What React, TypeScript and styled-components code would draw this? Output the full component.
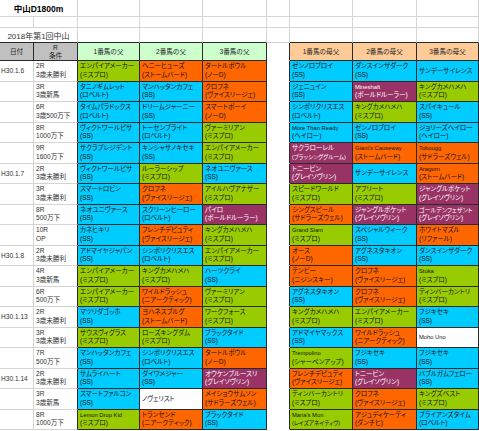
import React from "react";
import styled, { createGlobalStyle } from "styled-components";

type Fill = "g" | "o" | "b" | "p" | "w";
type Horse = [Fill, string, string?];
interface Race {
  date?: string;
  r: string;
  cond: string;
  horses: Horse[];
}

const FILL: Record<Fill, string> = {
  g: "#99cc00",
  o: "#ff6600",
  b: "#00ccff",
  p: "#993366",
  w: "#ffffff",
};
const DARK = "#2a2a2a";
const LIGHT = "#d4d4d4";
const FONT = `"Liberation Sans", "Noto Sans CJK JP", sans-serif`;

const GlobalStyle = createGlobalStyle`
  html, body { margin: 0; padding: 0; background: #fff; }
  body { font-family: ${FONT}; }
`;

const Sheet = styled.div`
  display: grid;
  grid-template-columns: 34px 44px 62px 63px 64px 23px 63px 64px 62px;
  grid-template-rows: 17px 11px 15px 18px repeat(18, 20.5px);
  width: 479px;
  font-family: ${FONT};
  color: #222;
`;

const BaseCell = styled.div<{ $right?: string; $bottom?: string }>`
  box-sizing: border-box;
  min-width: 0;
  border-right: 1px solid ${(p) => p.$right ?? LIGHT};
  border-bottom: 1px solid ${(p) => p.$bottom ?? LIGHT};
`;

const TitleCell = styled(BaseCell)<{ $bold?: boolean }>`
  grid-column: span 2;
  display: flex;
  align-items: center;
  justify-content: center;
  white-space: nowrap;
  font-size: ${(p) => (p.$bold ? "8.5px" : "8px")};
  font-weight: ${(p) => (p.$bold ? 700 : 400)};
  color: ${(p) => (p.$bold ? "#000" : "#333")};
`;

const HeadCell = styled(BaseCell)<{ $tone: "grey" | "sire" | "dam" }>`
  background: ${(p) =>
    p.$tone === "grey" ? "#c0c0c0" : p.$tone === "sire" ? "#ccffcc" : "#ffcc99"};
  border-right-color: ${DARK};
  border-bottom-color: ${DARK};
  display: flex;
  flex-direction: column;
  align-items: center;
  justify-content: center;
  font-size: 6.6px;
  line-height: 8px;
  color: #222;
  white-space: nowrap;
`;

const SpacerCell = styled(BaseCell)`
  border-right-color: ${DARK};
  border-bottom-color: #fff;
`;

const DateCell = styled(BaseCell)`
  display: flex;
  align-items: center;
  padding-left: 1px;
  font-size: 6.6px;
  color: #333;
  white-space: nowrap;
`;

const CondCell = styled(BaseCell)`
  border-right-color: ${DARK};
  display: flex;
  flex-direction: column;
  justify-content: center;
  padding-left: 2px;
  font-size: 6.6px;
  line-height: 8.5px;
  color: #333;
  white-space: nowrap;
`;

const HorseCell = styled(BaseCell)<{ $fill: Fill }>`
  border-right-color: ${DARK};
  border-bottom-color: ${DARK};
  background: ${(p) => FILL[p.$fill]};
  color: ${(p) => (p.$fill === "p" ? "#ffffff" : "#111")};
  display: flex;
  flex-direction: column;
  justify-content: center;
  padding-left: 2px;
  overflow: hidden;
  line-height: 8.5px;
  font-feature-settings: "palt";
  white-space: nowrap;
`;

const Name = styled.span<{ $latin?: boolean; $long?: boolean }>`
  display: block;
  font-size: ${(p) => (p.$latin ? "5.8px" : p.$long ? "6px" : "6.5px")};
`;

const Lineage = styled.span<{ $long?: boolean }>`
  display: block;
  font-size: ${(p) => (p.$long ? "5.6px" : "6.5px")};
`;

const races: Race[] = [
  { date: "H30.1.6", r: "2R", cond: "3歳未勝利", horses: [["g", "エンパイアメーカー", "ミスプロ"], ["o", "ヘニーヒューズ", "ストームバード"], ["o", "タートルボウル", "ノーD"], ["b", "ゼンノロブロイ", "SS"], ["b", "ダンスインザダーク", "SS"], ["b", "サンデーサイレンス"]] },
  { r: "3R", cond: "3歳新馬", horses: [["b", "タニノギムレット", "ロベルト"], ["b", "マンハッタンカフェ", "SS"], ["o", "クロフネ", "ヴァイスリージェ"], ["b", "ジェニュイン", "SS"], ["p", "Mineshaft", "ボールドルーラー"], ["g", "キングカメハメハ", "ミスプロ"]] },
  { r: "6R", cond: "3歳500万下", horses: [["b", "タイムパラドックス", "ロベルト"], ["b", "ドリームジャーニー", "SS"], ["o", "スマートボーイ", "ノーD"], ["b", "シンボリクリスエス", "ロベルト"], ["g", "キングカメハメハ", "ミスプロ"], ["b", "スパイキュール", "SS"]] },
  { r: "8R", cond: "1000万下", horses: [["b", "ヴィクトワールピサ", "SS"], ["b", "トーセンブライト", "ロベルト"], ["g", "ヴァーミリアン", "ミスプロ"], ["b", "More Than Ready", "ヘイロー"], ["b", "ゼンノロブロイ", "SS"], ["b", "ジョリーズヘイロー", "ヘイロー"]] },
  { r: "9R", cond: "1600万下", horses: [["b", "サクラプレジデント", "SS"], ["b", "キンシャサノキセキ", "SS"], ["g", "エンパイアメーカー", "ミスプロ"], ["p", "サクラローレル", "ブラッシンググルーム"], ["o", "Giant's Causeway", "ストームバード"], ["o", "Tobougg", "サドラーズウェル"]] },
  { date: "H30.1.7", r: "2R", cond: "3歳未勝利", horses: [["b", "ヴィクトワールピサ", "SS"], ["g", "ルーラーシップ", "ミスプロ"], ["b", "ネオユニヴァース", "SS"], ["p", "トニービン", "グレイソヴリン"], ["b", "サンデーサイレンス"], ["o", "Aragorn", "ストームバード"]] },
  { r: "3R", cond: "3歳未勝利", horses: [["b", "スマートロビン", "SS"], ["o", "クロフネ", "ヴァイスリージェ"], ["g", "アイルハヴアナザー", "ミスプロ"], ["g", "スピードワールド", "ミスプロ"], ["g", "アフリート", "ミスプロ"], ["p", "ジャングルポケット", "グレイソヴリン"]] },
  { r: "8R", cond: "500万下", horses: [["b", "ネオユニヴァース", "SS"], ["b", "スクリーンヒーロー", "ロベルト"], ["p", "パイロ", "ボールドルーラー"], ["o", "シングスピール", "サドラーズウェル"], ["p", "ジャングルポケット", "グレイソヴリン"], ["p", "ゴールデンフェザント", "グレイソヴリン"]] },
  { r: "10R", cond: "OP", horses: [["b", "カネヒキリ", "SS"], ["o", "フレンチデピュティ", "ヴァイスリージェ"], ["g", "キングカメハメハ", "ミスプロ"], ["g", "Grand Slam", "ミスプロ"], ["b", "スペシャルウィーク", "SS"], ["o", "ホワイトマズル", "リファール"]] },
  { date: "H30.1.8", r: "2R", cond: "3歳未勝利", horses: [["b", "アドマイヤジャパン", "SS"], ["b", "シンボリクリスエス", "ロベルト"], ["g", "エンパイアメーカー", "ミスプロ"], ["o", "オース", "ノーD"], ["b", "アグネスタキオン", "SS"], ["b", "ダンスインザダーク", "SS"]] },
  { r: "4R", cond: "3歳新馬", horses: [["g", "エンパイアメーカー", "ミスプロ"], ["g", "キングカメハメハ", "ミスプロ"], ["b", "ハーツクライ", "SS"], ["o", "テンビー", "ニジンスキー"], ["o", "クロフネ", "ヴァイスリージェ"], ["g", "Stuka", "ミスプロ"]] },
  { r: "6R", cond: "500万下", horses: [["g", "エンパイアメーカー", "ミスプロ"], ["o", "ワイルドラッシュ", "ニアークティック"], ["g", "ヴァーミリアン", "ミスプロ"], ["b", "アグネスタキオン", "SS"], ["o", "クロフネ", "ヴァイスリージェ"], ["g", "ティンバーカントリ", "ミスプロ"]] },
  { date: "H30.1.13", r: "2R", cond: "3歳未勝利", horses: [["b", "マツリダゴッホ", "SS"], ["o", "ヨハネスブルグ", "ストームバード"], ["g", "ワークフォース", "ミスプロ"], ["g", "キングカメハメハ", "ミスプロ"], ["g", "エンパイアメーカー", "ミスプロ"], ["b", "フジキセキ", "SS"]] },
  { r: "3R", cond: "3歳未勝利", horses: [["g", "サウスヴィグラス", "ミスプロ"], ["g", "ローズキングダム", "ミスプロ"], ["b", "ブラックタイド", "SS"], ["b", "アドマイヤマックス", "SS"], ["o", "ワイルドラッシュ", "ニアークティック"], ["w", "Moho Uno"]] },
  { r: "7R", cond: "500万下", horses: [["b", "マンハッタンカフェ", "SS"], ["b", "シンボリクリスエス", "ロベルト"], ["o", "タートルボウル", "ノーD"], ["g", "Trempolino", "シャーペンアップ"], ["b", "フジキセキ", "SS"], ["b", "フジキセキ", "SS"]] },
  { date: "H30.1.14", r: "2R", cond: "3歳未勝利", horses: [["b", "サムライハート", "SS"], ["b", "ダイワメジャー", "SS"], ["p", "オウケンブルースリ", "グレイソヴリン"], ["o", "フレンチデピュティ", "ヴァイスリージェ"], ["p", "トニービン", "グレイソヴリン"], ["b", "バブルガムフェロー", "SS"]] },
  { r: "3R", cond: "3歳新馬", horses: [["b", "スマートファルコン", "SS"], ["w", "ノヴェリスト"], ["o", "メイショウサムソン", "サドラーズウェル"], ["g", "ティンバーカントリ", "ミスプロ"], ["o", "クロフネ", "ヴァイスリージェ"], ["g", "キングズベスト", "ミスプロ"]] },
  { r: "8R", cond: "1000万下", horses: [["g", "Lemon Drop Kid", "ミスプロ"], ["o", "トランセンド", "ニアークティック"], ["b", "ブラックタイド", "SS"], ["g", "Maria's Mon", "レイズアネイティヴ"], ["o", "アジュディケーティ", "ダンチヒ"], ["b", "ブライアンズタイム", "ロベルト"]] },
];

const sireHeads = ["1番馬の父", "2番馬の父", "3番馬の父"];
const damHeads = ["1番馬の母父", "2番馬の母父", "3番馬の母父"];

const HorseBox: React.FC<{ h: Horse }> = ({ h }) => {
  const [fill, name, line] = h;
  return (
    <HorseCell $fill={fill}>
      <Name $latin={/^[A-Za-z]/.test(name)} $long={name.length >= 10}>
        {name}
      </Name>
      {line && <Lineage $long={line.length >= 9}>({line})</Lineage>}
    </HorseCell>
  );
};

const blanks = (n: number, bottom?: string, spacerAt?: number) =>
  Array.from({ length: n }, (_, i) => (
    <BaseCell key={i} $bottom={spacerAt === i ? LIGHT : bottom} />
  ));

export default function App() {
  return (
    <>
      <GlobalStyle />
      <Sheet>
        <TitleCell $bold>中山D1800m</TitleCell>
        {blanks(7)}
        {blanks(9)}
        <TitleCell $bottom={DARK}>2018年第1回中山</TitleCell>
        {blanks(7, DARK, 3)}

        <HeadCell $tone="grey">日付</HeadCell>
        <HeadCell $tone="grey">
          <span>R</span>
          <span>条件</span>
        </HeadCell>
        {sireHeads.map((t) => (
          <HeadCell key={t} $tone="sire">{t}</HeadCell>
        ))}
        <SpacerCell />
        {damHeads.map((t) => (
          <HeadCell key={t} $tone="dam">{t}</HeadCell>
        ))}

        {races.map((race, i) => (
          <React.Fragment key={i}>
            <DateCell>{race.date ?? ""}</DateCell>
            <CondCell>
              <span>{race.r}</span>
              <span>{race.cond}</span>
            </CondCell>
            {race.horses.slice(0, 3).map((h, j) => (
              <HorseBox key={j} h={h} />
            ))}
            <SpacerCell />
            {race.horses.slice(3).map((h, j) => (
              <HorseBox key={j + 3} h={h} />
            ))}
          </React.Fragment>
        ))}
      </Sheet>
    </>
  );
}
